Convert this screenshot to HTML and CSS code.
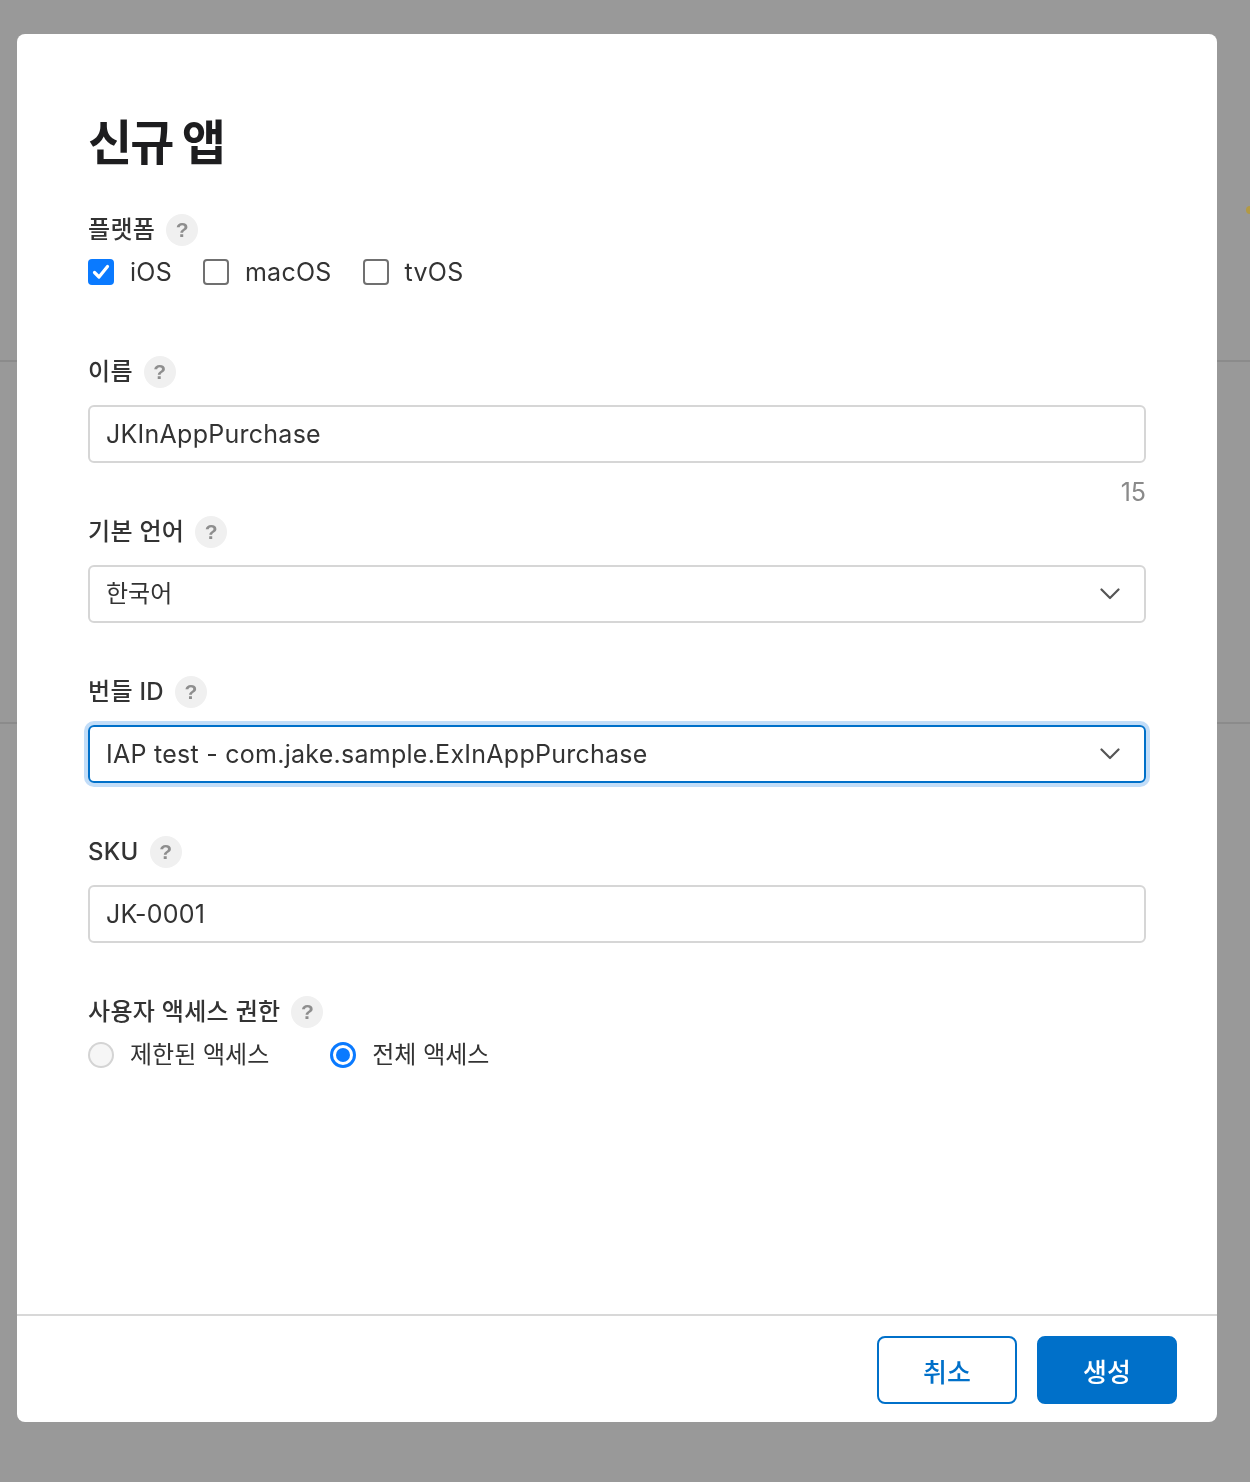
FILE: index.html
```html
<!DOCTYPE html>
<html lang="ko">
<head>
<meta charset="utf-8">
<title>신규 앱</title>
<link rel="stylesheet" href="styles.css">
</head>
<body>
<div class="page">
  <div class="page-head">
    <div class="seg"><span class="seg-row"></span><span class="seg-row"></span><span class="seg-row"></span><span class="seg-row last"></span></div>
    <span class="dot"></span>
  </div>
  <div class="page-band"></div>
</div>

<div class="modal">
  <div class="modal-body">
    <h1 class="title">신규 앱</h1>

    <div class="field field-platform">
      <div class="label-row"><span class="label">플랫폼</span><span class="help">?</span></div>
      <div class="options checks">
        <label class="opt"><span class="checkbox checked"><svg viewBox="0 0 26 26" width="26" height="26"><path d="M6.5 13.5 L11 18 L19.5 7.5" fill="none" stroke="#fff" stroke-width="3.2" stroke-linecap="round" stroke-linejoin="round"/></svg></span><span class="opt-text latin">iOS</span></label>
        <label class="opt"><span class="checkbox"></span><span class="opt-text latin">macOS</span></label>
        <label class="opt"><span class="checkbox"></span><span class="opt-text latin">tvOS</span></label>
      </div>
    </div>

    <div class="field">
      <div class="label-row"><span class="label">이름</span><span class="help">?</span></div>
      <div class="box"><span class="box-text">JKInAppPurchase</span></div>
      <div class="field-foot"><span class="counter">15</span></div>
    </div>

    <div class="field">
      <div class="label-row"><span class="label">기본 언어</span><span class="help">?</span></div>
      <div class="box select"><span class="box-text ko">한국어</span><svg class="chev" viewBox="0 0 20 12" width="20" height="12"><polyline points="1.5,1.5 10,10 18.5,1.5" fill="none" stroke="#555" stroke-width="2.2" stroke-linecap="round" stroke-linejoin="round"/></svg></div>
      <div class="field-foot"></div>
    </div>

    <div class="field">
      <div class="label-row"><span class="label">번들 ID</span><span class="help">?</span></div>
      <div class="box select focused"><span class="box-text">IAP test - com.jake.sample.ExInAppPurchase</span><svg class="chev" viewBox="0 0 20 12" width="20" height="12"><polyline points="1.5,1.5 10,10 18.5,1.5" fill="none" stroke="#555" stroke-width="2.2" stroke-linecap="round" stroke-linejoin="round"/></svg></div>
      <div class="field-foot"></div>
    </div>

    <div class="field">
      <div class="label-row"><span class="label">SKU</span><span class="help">?</span></div>
      <div class="box"><span class="box-text">JK-0001</span></div>
      <div class="field-foot"></div>
    </div>

    <div class="field">
      <div class="label-row"><span class="label">사용자 액세스 권한</span><span class="help">?</span></div>
      <div class="options radios">
        <label class="opt"><span class="radio"></span><span class="opt-text">제한된 액세스</span></label>
        <label class="opt"><span class="radio checked"><span class="radio-dot"></span></span><span class="opt-text">전체 액세스</span></label>
      </div>
    </div>
  </div>

  <div class="modal-footer">
    <button class="btn btn-secondary" type="button">취소</button>
    <button class="btn btn-primary" type="button">생성</button>
  </div>
</div>
</body>
</html>
```

FILE: styles.css
```css
* { box-sizing: border-box; }

html, body {
  margin: 0;
  padding: 0;
}

body {
  width: 1250px;
  height: 1482px;
  background: #999999;
  font-family: "Inter", "Noto Sans CJK KR", sans-serif;
  color: #333333;
  overflow: hidden;
}

/* page behind the overlay */
.page-head {
  height: 362px;
  border-bottom: 2px solid #8b8b8b;
  display: flex;
  justify-content: flex-end;
  align-items: flex-start;
  padding-top: 110px;
  padding-right: 0;
}

.seg {
  width: 160px;
  height: 140px;
  border: 1.5px solid #6e6e6e;
  border-radius: 0 24px 24px 0;
  display: flex;
  flex-direction: column;
  margin-right: 29px;
}

.seg-row {
  flex: 1;
  border-bottom: 1px solid #707070;
}

.seg-row.last { border-bottom: none; }

.dot {
  width: 8px;
  height: 8px;
  border-radius: 50%;
  background: #b39a45;
  margin-top: 96px;
  margin-right: -4px;
}

.page-band {
  height: 362px;
  border-bottom: 2px solid #8b8b8b;
}

/* modal */
.modal {
  position: fixed;
  top: 34px;
  left: 17px;
  width: 1200px;
  height: 1388px;
  background: #ffffff;
  border-radius: 8px;
  display: flex;
  flex-direction: column;
  overflow: hidden;
}

.modal-body {
  flex: 1;
  padding: 81px 71px 0 71px;
}

.title {
  margin: 0 0 43px 0;
  font-size: 48px;
  line-height: 56px;
  font-weight: 700;
  color: #1d1d1f;
  letter-spacing: -2px;
}

.label-row {
  display: flex;
  align-items: center;
  height: 32px;
  gap: 11px;
}

.label {
  font-size: 24px;
  line-height: 32px;
  font-weight: 500;
  color: #333333;
  letter-spacing: 0.3px;
}

.help {
  width: 32px;
  height: 32px;
  border-radius: 50%;
  background: #f0f0f0;
  color: #8e8e8e;
  font-size: 21px;
  font-weight: 700;
  line-height: 32px;
  text-align: center;
  font-family: "Liberation Sans", "Inter", sans-serif;
}

.options {
  display: flex;
  align-items: center;
}

.checks {
  margin-top: 12px;
  gap: 31px;
}

.radios {
  margin-top: 13px;
  gap: 61px;
}

.field-platform {
  margin-bottom: 70px;
}

.opt {
  display: flex;
  align-items: center;
  gap: 16px;
}

.opt-text {
  font-size: 24px;
  line-height: 28px;
  color: #333333;
}

.opt-text.latin {
  font-size: 25px;
  letter-spacing: 0.25px;
}

.checkbox {
  width: 26px;
  height: 26px;
  border: 2px solid #707070;
  border-radius: 4px;
  background: #ffffff;
  display: block;
}

.checkbox.checked {
  border: none;
  background: #0a7aff;
}

.checkbox svg { display: block; }

.radio {
  width: 26px;
  height: 26px;
  border-radius: 50%;
  border: 2px solid #d4d4d4;
  background: #f6f6f6;
  display: flex;
  align-items: center;
  justify-content: center;
}

.radio.checked {
  border: 3px solid #0a7aff;
  background: #ffffff;
}

.radio-dot {
  width: 14px;
  height: 14px;
  border-radius: 50%;
  background: #0a7aff;
}

.box {
  margin-top: 17px;
  height: 58px;
  border: 2px solid #d6d6d6;
  border-radius: 6px;
  display: flex;
  align-items: center;
  padding: 0 24px 0 16px;
}

.box-text {
  flex: 1;
  font-size: 25px;
  line-height: 30px;
  letter-spacing: 0.26px;
  color: #333333;
}

.box-text.ko {
  font-size: 24px;
  letter-spacing: 0;
}

.select .chev {
  flex: none;
  display: block;
}

.focused {
  border-color: #0070c9;
  box-shadow: 0 0 0 4px #c2ddf8;
}

.field-foot {
  height: 53px;
  display: flex;
  justify-content: flex-end;
  padding-top: 16px;
}

.counter {
  font-size: 25px;
  line-height: 26px;
  color: #8a8a8a;
}

/* footer */
.modal-footer {
  border-top: 2px solid #d8d8d8;
  padding: 20px 40px 18px 40px;
  display: flex;
  justify-content: flex-end;
  gap: 20px;
}

.btn {
  width: 140px;
  height: 68px;
  border-radius: 8px;
  font-family: "Inter", "Noto Sans CJK KR", sans-serif;
  font-size: 26px;
  font-weight: 500;
  cursor: pointer;
}

.btn-secondary {
  background: #ffffff;
  border: 2px solid #0070c9;
  color: #0070c9;
}

.btn-primary {
  background: #0070c9;
  border: 2px solid #0070c9;
  color: #ffffff;
}
```
